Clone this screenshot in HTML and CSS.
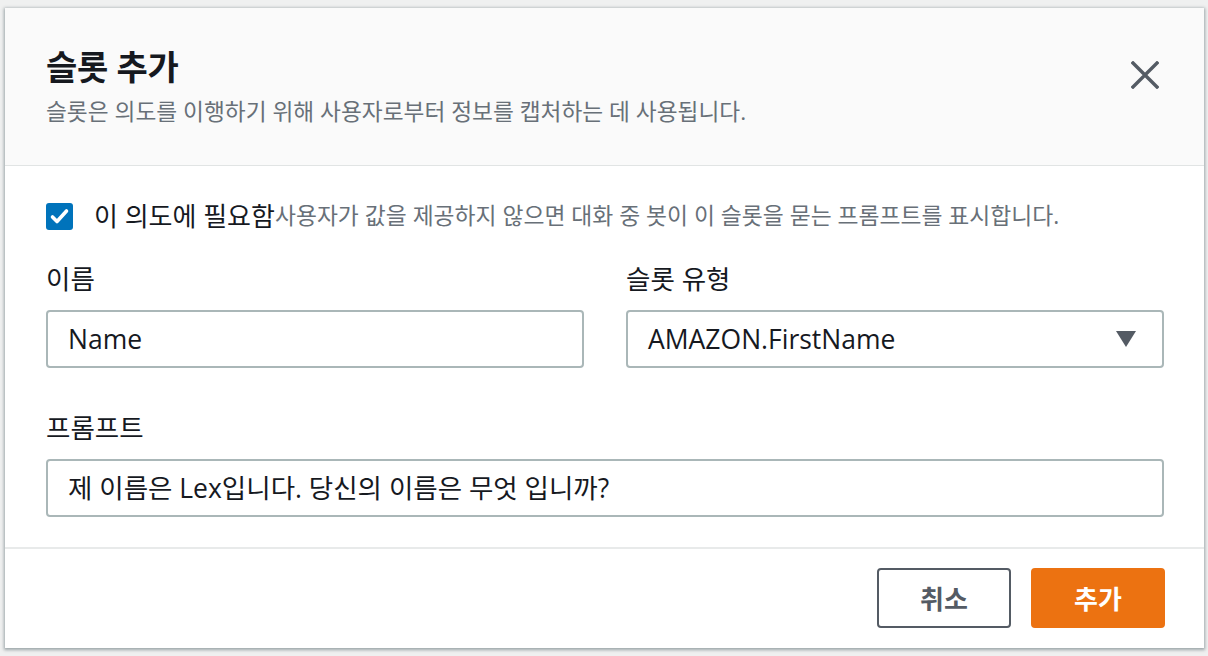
FILE: index.html
```html
<!DOCTYPE html>
<html lang="ko">
<head>
<meta charset="utf-8">
<title>슬롯 추가</title>
<link rel="stylesheet" href="styles.css">
</head>
<body>
<div class="page">
  <div class="modal">
    <div class="modal-header">
      <div class="header-text">
        <h1 class="title">슬롯 추가</h1>
        <p class="subtitle">슬롯은 의도를 이행하기 위해 사용자로부터 정보를 캡처하는 데 사용됩니다.</p>
      </div>
      <button class="close" aria-label="닫기">
        <svg width="28" height="28" viewBox="0 0 28 28"><path d="M2 2 L26 26 M26 2 L2 26" stroke="#545b64" stroke-width="3.4" stroke-linecap="square" fill="none"/></svg>
      </button>
    </div>
    <div class="modal-body">
      <label class="check-row">
        <span class="checkbox">
          <svg width="27" height="27" viewBox="0 0 27 27"><path d="M6.5 14 L11 18.5 L20.5 8" stroke="#fff" stroke-width="3.6" fill="none" stroke-linecap="round" stroke-linejoin="round"/></svg>
        </span>
        <span class="check-label">이 의도에 필요함</span><span class="check-desc">사용자가 값을 제공하지 않으면 대화 중 봇이 이 슬롯을 묻는 프롬프트를 표시합니다.</span>
      </label>
      <div class="grid">
        <div class="field">
          <div class="label">이름</div>
          <div class="input"><span class="value">Name</span></div>
        </div>
        <div class="field">
          <div class="label">슬롯 유형</div>
          <div class="input select"><span class="value">AMAZON.FirstName</span>
            <svg class="caret" width="20" height="16" viewBox="0 0 20 16"><path d="M0 0 H20 L10 16 Z" fill="#545b64"/></svg>
          </div>
        </div>
      </div>
      <div class="field prompt">
        <div class="label">프롬프트</div>
        <div class="input"><span class="value">제 이름은 Lex입니다. 당신의 이름은 무엇 입니까?</span></div>
      </div>
    </div>
    <div class="modal-footer">
      <button class="btn btn-cancel">취소</button>
      <button class="btn btn-primary">추가</button>
    </div>
  </div>
</div>
</body>
</html>
```
FILE: styles.css
```css
* { box-sizing: border-box; }
html, body { margin: 0; padding: 0; }
body {
  background: #eff0f0;
  font-family: "Open Sans", "Noto Sans CJK KR", sans-serif;
  color: #16191f;
  width: 1208px;
  height: 656px;
  overflow: hidden;
}
.page {
  padding: 8px 4px 8px 5px;
}
.modal {
  width: 1199px;
  height: 640px;
  background: #fff;
  box-shadow: 0 1px 3px 1px rgba(0, 28, 36, 0.35);
  display: flex;
  flex-direction: column;
}
.modal-header {
  background: #fafafa;
  border-bottom: 1px solid #e1e4e4;
  padding: 38px 40px 37px 41px;
  display: flex;
  justify-content: space-between;
  align-items: flex-start;
}
.title {
  margin: 0;
  font-size: 34px;
  line-height: 42px;
  font-weight: 700;
  letter-spacing: -0.3px;
}
.subtitle {
  margin: 8px 0 0;
  font-size: 22.7px;
  line-height: 32px;
  color: #687078;
}
.close {
  background: none;
  border: 0;
  padding: 0;
  margin: 15px 5px 0 0;
  width: 28px;
  height: 28px;
  cursor: pointer;
}
.close svg { display: block; }
.modal-body {
  padding: 33px 40px 30px 41px;
  flex: 1;
}
.check-row {
  display: flex;
  align-items: center;
  height: 34px;
}
.checkbox {
  width: 27px;
  height: 27px;
  background: #0073bb;
  border-radius: 3px;
  flex: none;
  margin-right: 21px;
}
.checkbox svg { display: block; }
.check-label {
  font-size: 26px;
  line-height: 34px;
}
.check-desc {
  font-size: 22.8px;
  line-height: 34px;
  color: #687078;
}
.grid {
  display: grid;
  grid-template-columns: 1fr 1fr;
  column-gap: 42px;
  margin-top: 28px;
}
.label {
  font-size: 26.5px;
  line-height: 36px;
  margin-bottom: 13px;
}
.input {
  height: 58px;
  border: 2px solid #aab7b8;
  border-radius: 4px;
  padding: 0 20px;
  display: flex;
  align-items: center;
  justify-content: space-between;
}
.value {
  font-size: 26.5px;
  line-height: 34px;
}
.caret { display: block; margin-right: 6px; }
.prompt { margin-top: 42px; }
.modal-footer {
  border-top: 2px solid #e8eaea;
  padding: 19px 39px 20px;
  display: flex;
  justify-content: flex-end;
  gap: 20px;
}
.btn {
  height: 60px;
  width: 134px;
  border-radius: 4px;
  font-family: "Open Sans", "Noto Sans CJK KR", sans-serif;
  font-size: 26px;
  font-weight: 700;
  cursor: pointer;
}
.btn-cancel {
  background: #fff;
  border: 2px solid #545b64;
  color: #545b64;
}
.btn-primary {
  background: #ec7211;
  border: 2px solid #ec7211;
  color: #fff;
}
```
